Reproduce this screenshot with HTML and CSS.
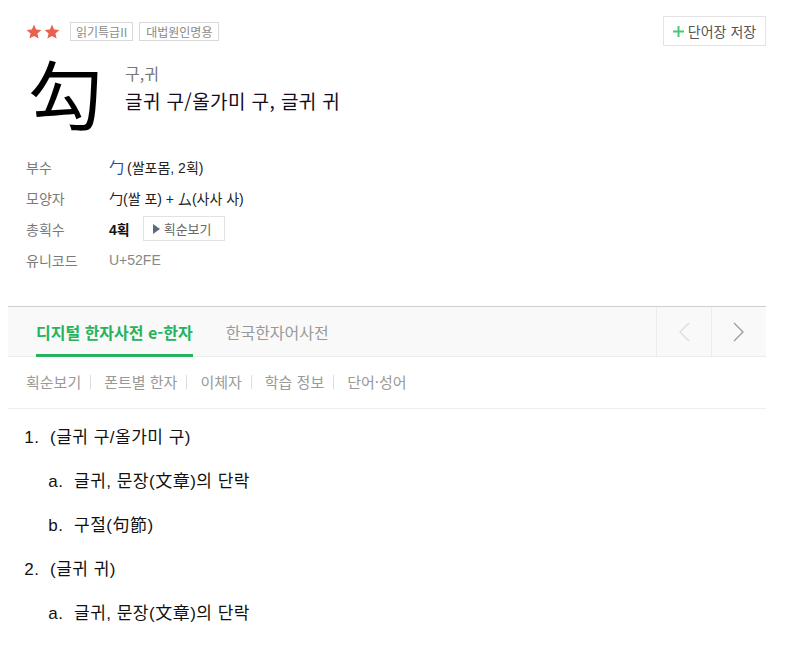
FILE: index.html
```html
<!DOCTYPE html>
<html lang="ko">
<head>
<meta charset="utf-8">
<title>勾 - 한자사전</title>
<link rel="stylesheet" href="styles.css">
</head>
<body>
<div class="page">
  <header class="entry">
    <div class="top-row">
      <div class="badges">
        <span class="stars" aria-label="별 2개">
          <svg width="16" height="15" viewBox="0 0 16 15"><path d="M8 0.5l2.1 4.9 5.3.5-4 3.5 1.2 5.2L8 11.9l-4.6 2.7 1.2-5.2-4-3.5 5.3-.5z" fill="#e8604e"/></svg>
          <svg width="16" height="15" viewBox="0 0 16 15"><path d="M8 0.5l2.1 4.9 5.3.5-4 3.5 1.2 5.2L8 11.9l-4.6 2.7 1.2-5.2-4-3.5 5.3-.5z" fill="#e8604e"/></svg>
        </span>
        <span class="tag">읽기특급II</span>
        <span class="tag">대법원인명용</span>
      </div>
      <button class="save-btn" type="button">
        <svg class="plus" width="11" height="11" viewBox="0 0 11 11"><path d="M5.5 0v11M0 5.5h11" stroke="#4cc574" stroke-width="2"/></svg>
        <span>단어장 저장</span>
      </button>
    </div>
    <div class="hanja-row">
      <div class="hanja">勾</div>
      <div class="readings">
        <div class="sound">구,귀</div>
        <div class="meaning">글귀 구/올가미 구, 글귀 귀</div>
      </div>
    </div>
    <dl class="info">
      <div class="info-row"><dt>부수</dt><dd><span class="radical">勹</span> (쌀포몸, 2획)</dd></div>
      <div class="info-row"><dt>모양자</dt><dd>勹(쌀 포) + 厶(사사 사)</dd></div>
      <div class="info-row"><dt>총획수</dt><dd><span class="strokes">4획</span><button class="stroke-btn" type="button"><span class="tri"></span>획순보기</button></dd></div>
      <div class="info-row"><dt>유니코드</dt><dd class="uni">U+52FE</dd></div>
    </dl>
  </header>

  <nav class="tabs">
    <a class="tab active">디지털 한자사전 e-한자</a>
    <a class="tab">한국한자어사전</a>
    <div class="arrows">
      <span class="arrow">
        <svg width="12" height="20" viewBox="0 0 12 20"><path d="M11 1L2 10l9 9" fill="none" stroke="#dcdcdc" stroke-width="1.3"/></svg>
      </span>
      <span class="arrow">
        <svg width="12" height="20" viewBox="0 0 12 20"><path d="M1 1l9 9-9 9" fill="none" stroke="#9a9a9a" stroke-width="1.3"/></svg>
      </span>
    </div>
  </nav>

  <ul class="subnav">
    <li>획순보기</li>
    <li>폰트별 한자</li>
    <li>이체자</li>
    <li>학습 정보</li>
    <li>단어·성어</li>
  </ul>

  <ol class="defs">
    <li>
      <p class="def-title">(글귀 구/올가미 구)</p>
      <ol class="sub">
        <li>글귀, 문장(文章)의 단락</li>
        <li>구절(句節)</li>
      </ol>
    </li>
    <li>
      <p class="def-title">(글귀 귀)</p>
      <ol class="sub">
        <li>글귀, 문장(文章)의 단락</li>
      </ol>
    </li>
  </ol>
</div>
</body>
</html>
```

FILE: styles.css
```css
* { box-sizing: border-box; }
html, body { margin: 0; padding: 0; background: #fff; }
body {
  padding: 8px;
  font-family: "Liberation Sans", "Noto Sans CJK KR", sans-serif;
  color: #222;
}
.page { width: 758px; }

/* header */
.entry { padding: 8px 0 0 18px; }
.top-row {
  display: flex;
  justify-content: space-between;
  align-items: center;
  height: 30px;
}
.badges { display: flex; align-items: center; gap: 6px; }
.stars {
  display: flex;
  gap: 2px;
  margin-right: 4px;
}
.stars svg { display: block; }
.tag {
  border: 1px solid #d9d9d9;
  color: #8a8a8a;
  font-size: 12px;
  line-height: 17px;
  height: 19px;
  padding: 0 5px;
  font-family: "Noto Sans CJK KR", sans-serif;
}
.tag + .tag { padding: 0 6px; }
.save-btn {
  height: 30px;
  width: 103px;
  border: 1px solid #e3e3e3;
  background: #fff;
  display: flex;
  align-items: center;
  justify-content: center;
  gap: 4px;
  font-family: "Noto Sans CJK KR", sans-serif;
  font-size: 14px;
  color: #555;
  padding: 0;
}

.hanja-row {
  display: flex;
  align-items: flex-start;
  margin-top: 6px;
}
.hanja {
  font-family: "Noto Sans CJK SC", sans-serif;
  font-size: 75px;
  line-height: 80px;
  width: 99px;
  color: #000;
  padding-left: 2px;
}
.readings { padding-top: 9px; }
.sound {
  font-family: "Noto Sans CJK KR", sans-serif;
  font-size: 16px;
  line-height: 24px;
  color: #777;
}
.meaning {
  font-family: "Noto Sans CJK KR", sans-serif;
  font-size: 19px;
  letter-spacing: 0.4px;
  line-height: 30px;
  color: #160c1e;
  margin-top: 1px;
}

.info { margin: 19px 0 0 0; }
.info-row {
  display: flex;
  align-items: center;
  height: 31px;
}
.info dt {
  width: 83px;
  color: #7a7a7a;
  font-size: 14px;
  font-family: "Noto Sans CJK KR", sans-serif;
}
.info dd {
  margin: 0;
  font-size: 14px;
  color: #222;
  display: flex;
  align-items: center;
  font-family: "Liberation Sans", "Noto Sans CJK KR", sans-serif;
}
.radical { color: #2a4a9a; margin-right: 3px; font-size: 15px; }
.strokes { font-weight: 600; color: #111; font-size: 14px; }
.stroke-btn {
  margin-left: 13px;
  height: 25px;
  width: 82px;
  border: 1px solid #e2e2e2;
  background: #fff;
  display: flex;
  align-items: center;
  gap: 4px;
  padding: 0 0 0 9px;
  font-family: "Noto Sans CJK KR", sans-serif;
  font-size: 13px;
  color: #666;
}
.tri {
  width: 0; height: 0;
  border-left: 7px solid #5c6c80;
  border-top: 5px solid transparent;
  border-bottom: 5px solid transparent;
}
.info dd.uni { color: #888; }

/* tabs */
.tabs {
  margin-top: 31px;
  display: flex;
  align-items: stretch;
  height: 51px;
  border-top: 1px solid #cfcfcf;
  border-bottom: 1px solid #ececec;
  background: #f9f9f9;
  padding-left: 28px;
}
.tab {
  display: flex;
  align-items: center;
  font-family: "Noto Sans CJK KR", sans-serif;
  font-size: 16px;
  color: #999;
  margin-right: 33px;
  padding-top: 0;
}
.tab.active {
  color: #27b35b;
  font-weight: bold;
  border-bottom: 3px solid #27b35b;
  margin-bottom: -1px;
  padding-top: 2px;
}
.arrows { margin-left: auto; display: flex; }
.arrow {
  width: 55px;
  border-left: 1px solid #ececec;
  display: flex;
  align-items: center;
  justify-content: center;
}

/* sub nav */
.subnav {
  list-style: none;
  margin: 0;
  padding: 0 0 2px 18px;
  height: 52px;
  display: flex;
  align-items: center;
  border-bottom: 1px solid #eee;
  font-family: "Noto Sans CJK KR", sans-serif;
  font-size: 15px;
  color: #999;
}
.subnav li { display: flex; align-items: center; }
.subnav li + li::before {
  content: "";
  width: 1px;
  height: 14px;
  background: #dedede;
  margin: 0 13px 0 9px;
}

/* definitions */
.defs {
  margin: 0;
  padding: 7px 0 0 42px;
  font-family: "Liberation Sans", "Noto Sans CJK KR", sans-serif;
  font-size: 17px;
  letter-spacing: 0.5px;
  color: #111;
}
.defs > li::marker { content: counter(list-item) ".  "; }
.def-title { margin: 0; line-height: 44px; }
.sub {
  list-style: lower-alpha;
  margin: 0;
  padding: 0 0 0 24px;
}
.sub li { line-height: 44px; }
.sub li::marker { content: counter(list-item, lower-alpha) ".  "; }
```
